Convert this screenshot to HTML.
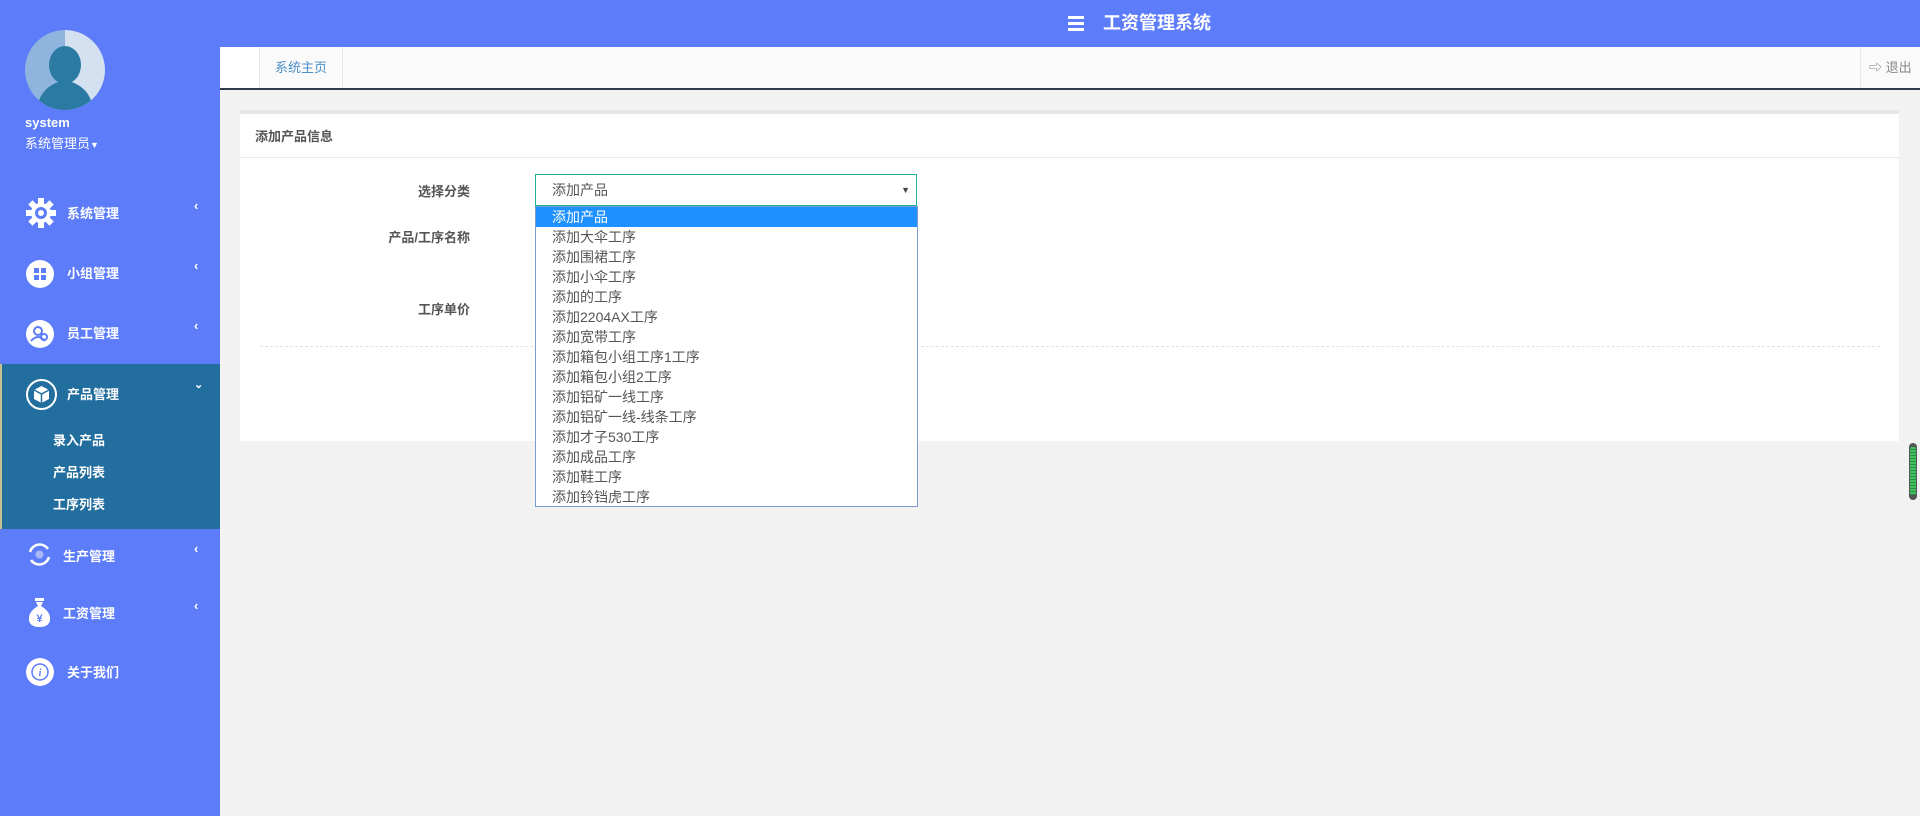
<!DOCTYPE html>
<html><head><meta charset="utf-8"><style>
*{margin:0;padding:0;box-sizing:border-box}
body{width:1920px;height:816px;overflow:hidden;background:#f2f2f2;font-family:"Liberation Sans","Noto Sans CJK SC",sans-serif;position:relative}
.abs{position:absolute}
#hdr{left:0;top:0;width:1920px;height:47px;background:#5c7cf9}
#side{left:0;top:0;width:220px;height:816px;background:#5c7cf9;color:#fff}
.mi{position:absolute;left:0;width:220px;font-size:13px;font-weight:bold;color:#fff}
.chev{position:absolute;left:194px;font-size:13px;font-weight:bold}
.ico{position:absolute;left:26px;width:28px;height:28px;border-radius:50%;background:#fff}
.opt{height:20px;line-height:20px;padding-left:16px;font-size:14px;color:#555}
</style></head><body>
<div id="hdr" class="abs"></div>
<div class="abs" style="left:1068px;top:16px;width:16px;height:3px;background:#fff"></div>
<div class="abs" style="left:1068px;top:22px;width:16px;height:3px;background:#fff"></div>
<div class="abs" style="left:1068px;top:28px;width:16px;height:3px;background:#fff"></div>
<div class="abs" style="left:1103px;top:11px;font-size:18px;font-weight:bold;color:#fff;line-height:24px">工资管理系统</div>

<div id="side" class="abs">
 <svg class="abs" style="left:25px;top:30px" width="80" height="80" viewBox="0 0 80 80">
  <defs><clipPath id="c"><circle cx="40" cy="40" r="40"/></clipPath></defs>
  <g clip-path="url(#c)"><rect width="40" height="80" fill="#8fb4dd"/><rect x="40" width="40" height="80" fill="#d3e1f1"/>
  <ellipse cx="40" cy="35" rx="16" ry="19" fill="#2a7aa3"/>
  <path d="M12 80 Q14 56 40 50 Q66 56 68 80Z" fill="#2a7aa3"/></g>
 </svg>
 <div class="abs" style="left:25px;top:115px;font-size:13px;font-weight:bold">system</div>
 <div class="abs" style="left:25px;top:133px;font-size:13px">系统管理员<span style="font-size:9px">▼</span></div>

 <div class="mi" style="top:203px"><div class="ico" style="top:-5px;background:none"><svg width="30" height="30" viewBox="0 0 30 30"><g fill="#fff"><circle cx="15" cy="15" r="10"/><rect x="12" y="0" width="6" height="30"/><rect x="0" y="12" width="30" height="6"/><rect x="12" y="0" width="6" height="30" transform="rotate(45 15 15)"/><rect x="12" y="0" width="6" height="30" transform="rotate(-45 15 15)"/></g><circle cx="15" cy="15" r="6" fill="#5c7cf9"/><circle cx="15" cy="15" r="3" fill="#fff"/></svg></div><span style="position:absolute;left:67px">系统管理</span><span class="chev" style="top:-5px">‹</span></div>
 <div class="mi" style="top:263px"><div class="ico" style="top:-3px"><svg width="28" height="28"><g fill="#5c7cf9"><rect x="8" y="8" width="5" height="5"/><rect x="15" y="8" width="5" height="5"/><rect x="8" y="15" width="5" height="5"/><rect x="15" y="15" width="5" height="5"/></g></svg></div><span style="position:absolute;left:67px">小组管理</span><span class="chev" style="top:-5px">‹</span></div>
 <div class="mi" style="top:323px"><div class="ico" style="top:-3px"><svg width="28" height="28"><g fill="none" stroke="#5c7cf9" stroke-width="2"><circle cx="12" cy="11" r="4"/><path d="M5 21Q12 13 19 21"/><circle cx="18" cy="17" r="3"/></g></svg></div><span style="position:absolute;left:67px">员工管理</span><span class="chev" style="top:-5px">‹</span></div>
 <div class="abs" style="left:0;top:364px;width:220px;height:165px;background:#216e9f;border-left:2px solid #c8c08a"></div>
 <div class="mi" style="top:384px"><div class="ico" style="top:-5px;width:31px;height:31px;background:none;border:2px solid #fff"><svg width="27" height="27"><path d="M13.5 5L21 9V18L13.5 22L6 18V9Z" fill="#fff"/><path d="M6 9L13.5 13L21 9M13.5 13V22" stroke="#216e9f" stroke-width="1.5" fill="none"/></svg></div><span style="position:absolute;left:67px">产品管理</span><span class="chev" style="top:-6px;font-size:11px">⌄</span></div>
 <div class="mi" style="top:430px;left:53px">录入产品</div>
 <div class="mi" style="top:462px;left:53px">产品列表</div>
 <div class="mi" style="top:494px;left:53px">工序列表</div>
 <div class="mi" style="top:546px"><svg class="abs" style="left:26px;top:-5px" width="27" height="27"><g fill="none" stroke="#fff" stroke-width="2.5"><path d="M4 11A10 10 0 0 1 22 8"/><path d="M23 16A10 10 0 0 1 5 19"/></g><circle cx="13.5" cy="13.5" r="4" fill="#aab8f5"/></svg><span style="position:absolute;left:63px">生产管理</span><span class="chev" style="top:-5px">‹</span></div>
 <div class="mi" style="top:603px"><svg class="abs" style="left:27px;top:-5px" width="25" height="30"><rect x="8" y="0" width="9" height="3" fill="#fff"/><path d="M9 4H16L14 8Q24 14 23 22Q22 29 12.5 29Q3 29 2 22Q1 14 11 8Z" fill="#fff"/><text x="12.5" y="24" font-size="11" fill="#5c7cf9" text-anchor="middle" font-family="Liberation Sans">¥</text></svg><span style="position:absolute;left:63px">工资管理</span><span class="chev" style="top:-5px">‹</span></div>
 <div class="mi" style="top:662px"><div class="ico" style="top:-4px"><svg width="28" height="28"><circle cx="14" cy="14" r="8" fill="none" stroke="#5c7cf9" stroke-width="1.5"/><text x="14" y="18" font-size="10" font-style="italic" font-weight="bold" fill="#5c7cf9" text-anchor="middle" font-family="Liberation Serif">i</text></svg></div><span style="position:absolute;left:67px">关于我们</span></div>
</div>

<div class="abs" style="left:220px;top:47px;width:1700px;height:41px;background:#fafafa"></div>
<div class="abs" style="left:220px;top:47px;width:39px;height:41px;background:#fff"></div>
<div class="abs" style="left:259px;top:47px;width:84px;height:41px;border-left:1px solid #e8e8e8;border-right:1px solid #e8e8e8;color:#4a8fcb;font-size:13px;line-height:41px;text-align:center">系统主页</div>
<div class="abs" style="left:1860px;top:47px;width:60px;height:41px;border-left:1px solid #e8e8e8;color:#888;font-size:13px;line-height:41px;padding-left:8px">⇨ 退出</div>
<div class="abs" style="left:220px;top:88px;width:1700px;height:2px;background:#2f3a4a"></div>

<div class="abs" style="left:240px;top:110px;width:1659px;height:331px;background:#fff;border-top:4px solid #e5e8eb"></div>
<div class="abs" style="left:255px;top:126px;font-size:13px;font-weight:bold;color:#555">添加产品信息</div>
<div class="abs" style="left:240px;top:157px;width:1659px;height:1px;background:#e7eaec"></div>
<div class="abs" style="left:240px;top:181px;width:230px;text-align:right;font-size:13px;font-weight:bold;color:#555">选择分类</div>
<div class="abs" style="left:240px;top:227px;width:230px;text-align:right;font-size:13px;font-weight:bold;color:#555">产品/工序名称</div>
<div class="abs" style="left:240px;top:299px;width:230px;text-align:right;font-size:13px;font-weight:bold;color:#555">工序单价</div>
<div class="abs" style="left:260px;top:346px;width:1620px;border-top:1px dashed #e2e2e2"></div>

<div class="abs" style="left:535px;top:174px;width:382px;height:32px;border:1px solid #1ab394;font-size:14px;color:#555;line-height:30px;padding-left:16px;background:#fff">添加产品<span style="position:absolute;right:6px;top:0;font-size:9px;color:#444">▼</span></div>
<div class="abs" style="left:535px;top:206px;width:383px;height:301px;border:1px solid #7a9cd3;background:#fff">
<div class="opt" style="background:#1e90ff;color:#fff">添加产品</div>
<div class="opt">添加大伞工序</div><div class="opt">添加围裙工序</div><div class="opt">添加小伞工序</div><div class="opt">添加的工序</div><div class="opt">添加2204AX工序</div><div class="opt">添加宽带工序</div><div class="opt">添加箱包小组工序1工序</div><div class="opt">添加箱包小组2工序</div><div class="opt">添加铝矿一线工序</div><div class="opt">添加铝矿一线-线条工序</div><div class="opt">添加才子530工序</div><div class="opt">添加成品工序</div><div class="opt">添加鞋工序</div><div class="opt">添加铃铛虎工序</div>
</div>

<div class="abs" style="left:1909px;top:443px;width:8px;height:57px;border-radius:4px;background:#555;padding:4px 1px"><div style="width:6px;height:48px;border-radius:2px;background:repeating-linear-gradient(#3fbf5f 0 2px,#2f8f47 2px 3px)"></div></div>
</body></html>
